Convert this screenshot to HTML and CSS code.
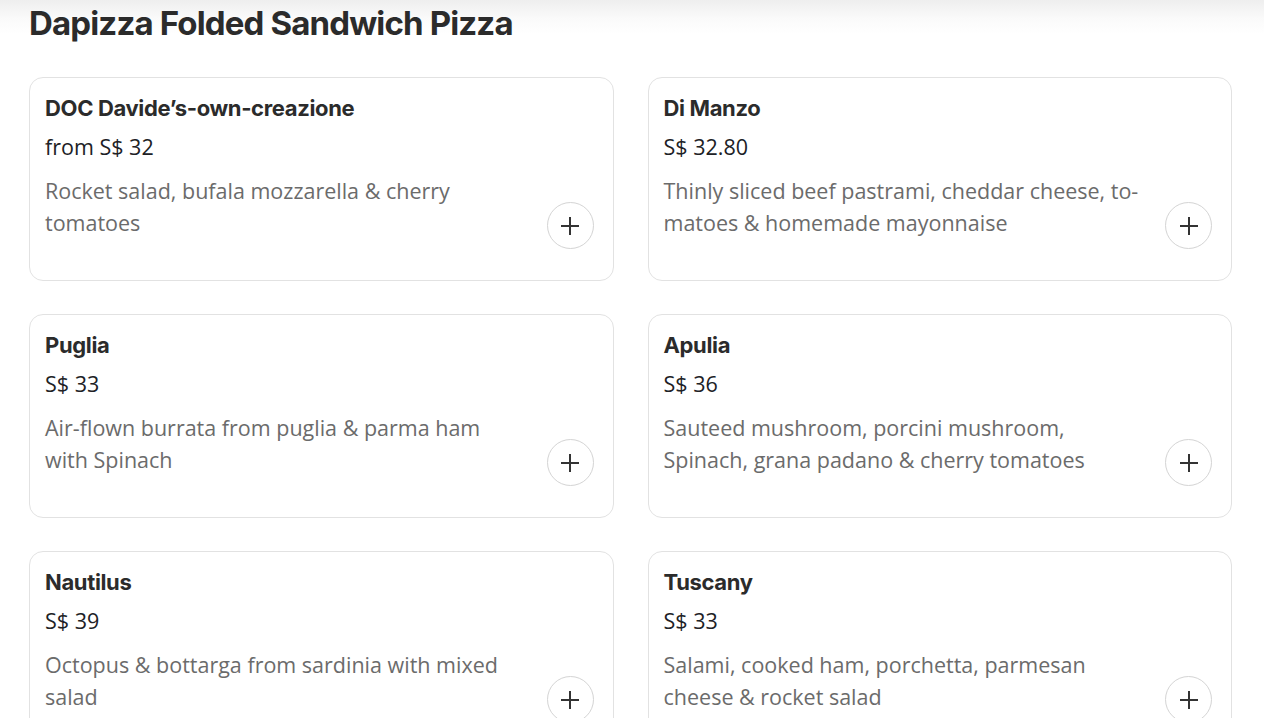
FILE: index.html
```html
<!DOCTYPE html>
<html lang="en">
<head>
<meta charset="utf-8">
<title>Dapizza Folded Sandwich Pizza</title>
<link rel="stylesheet" href="styles.css">
</head>
<body>
<main class="page">
  <h1 class="section-title">Dapizza Folded Sandwich Pizza</h1>
  <div class="grid">
    <div class="card">
      <h2 class="item-name">DOC Davide’s-own-creazione</h2>
      <div class="item-price">from S$ 32</div>
      <div class="item-row">
        <p class="item-desc">Rocket salad, bufala mozzarella &amp; cherry tomatoes</p>
        <button class="add-btn" aria-label="Add"><svg viewBox="0 0 20 20" width="20" height="20"><path d="M10 1v18M1 10h18" /></svg></button>
      </div>
    </div>
    <div class="card">
      <h2 class="item-name">Di Manzo</h2>
      <div class="item-price">S$ 32.80</div>
      <div class="item-row">
        <p class="item-desc">Thinly sliced beef pastrami, cheddar cheese, to&shy;matoes &amp; homemade mayonnaise</p>
        <button class="add-btn" aria-label="Add"><svg viewBox="0 0 20 20" width="20" height="20"><path d="M10 1v18M1 10h18" /></svg></button>
      </div>
    </div>
    <div class="card">
      <h2 class="item-name">Puglia</h2>
      <div class="item-price">S$ 33</div>
      <div class="item-row">
        <p class="item-desc">Air-flown burrata from puglia &amp; parma ham with Spinach</p>
        <button class="add-btn" aria-label="Add"><svg viewBox="0 0 20 20" width="20" height="20"><path d="M10 1v18M1 10h18" /></svg></button>
      </div>
    </div>
    <div class="card">
      <h2 class="item-name">Apulia</h2>
      <div class="item-price">S$ 36</div>
      <div class="item-row">
        <p class="item-desc">Sauteed mushroom, porcini mushroom, Spinach, grana padano &amp; cherry tomatoes</p>
        <button class="add-btn" aria-label="Add"><svg viewBox="0 0 20 20" width="20" height="20"><path d="M10 1v18M1 10h18" /></svg></button>
      </div>
    </div>
    <div class="card">
      <h2 class="item-name">Nautilus</h2>
      <div class="item-price">S$ 39</div>
      <div class="item-row">
        <p class="item-desc">Octopus &amp; bottarga from sardinia with mixed salad</p>
        <button class="add-btn" aria-label="Add"><svg viewBox="0 0 20 20" width="20" height="20"><path d="M10 1v18M1 10h18" /></svg></button>
      </div>
    </div>
    <div class="card">
      <h2 class="item-name">Tuscany</h2>
      <div class="item-price">S$ 33</div>
      <div class="item-row">
        <p class="item-desc">Salami, cooked ham, porchetta, parmesan cheese &amp; rocket salad</p>
        <button class="add-btn" aria-label="Add"><svg viewBox="0 0 20 20" width="20" height="20"><path d="M10 1v18M1 10h18" /></svg></button>
      </div>
    </div>
  </div>
</main>
</body>
</html>
```

FILE: styles.css
```css
* { box-sizing: border-box; }
html, body {
  margin: 0;
  padding: 0;
}
body {
  background: linear-gradient(#eeeeee 0px, #fafafa 18px, #ffffff 34px) no-repeat;
  background-color: #fff;
  font-family: "Open Sans", "Noto Sans", sans-serif;
  color: #202125;
  overflow: hidden;
}
.page {
  padding: 3px 32px 0 29px;
}
.section-title {
  margin: 0;
  font-family: Inter, Roboto, sans-serif;
  font-weight: 700;
  font-size: 33px;
  line-height: 40px;
  letter-spacing: -0.85px;
  color: #2b2b2b;
}
.grid {
  margin-top: 34px;
  display: grid;
  grid-template-columns: 1fr 1fr;
  column-gap: 34px;
  row-gap: 33px;
}
.card {
  border: 1px solid #e2e2e2;
  border-radius: 14px;
  padding: 15px 19px 31px 15px;
  background: #fff;
}
.item-name {
  margin: 0;
  font-family: Inter, Roboto, sans-serif;
  font-weight: 700;
  font-size: 22px;
  line-height: 30px;
  letter-spacing: -0.35px;
  color: #2b2b2b;
}
.item-price {
  margin-top: 9px;
  font-size: 21.5px;
  line-height: 30px;
  color: #202125;
}
.item-row {
  margin-top: 13px;
  display: flex;
  align-items: flex-end;
  justify-content: space-between;
}
.item-desc {
  margin: 0 0 10px 0;
  width: 480px;
  font-size: 21.5px;
  line-height: 32px;
  color: #6b6b6b;
}
.add-btn {
  flex: none;
  width: 47px;
  height: 47px;
  border-radius: 50%;
  border: 1px solid #d4d4d4;
  background: #fff;
  padding: 0;
  display: flex;
  align-items: center;
  justify-content: center;
}
.add-btn svg path {
  stroke: #333;
  stroke-width: 2;
  fill: none;
}
```
